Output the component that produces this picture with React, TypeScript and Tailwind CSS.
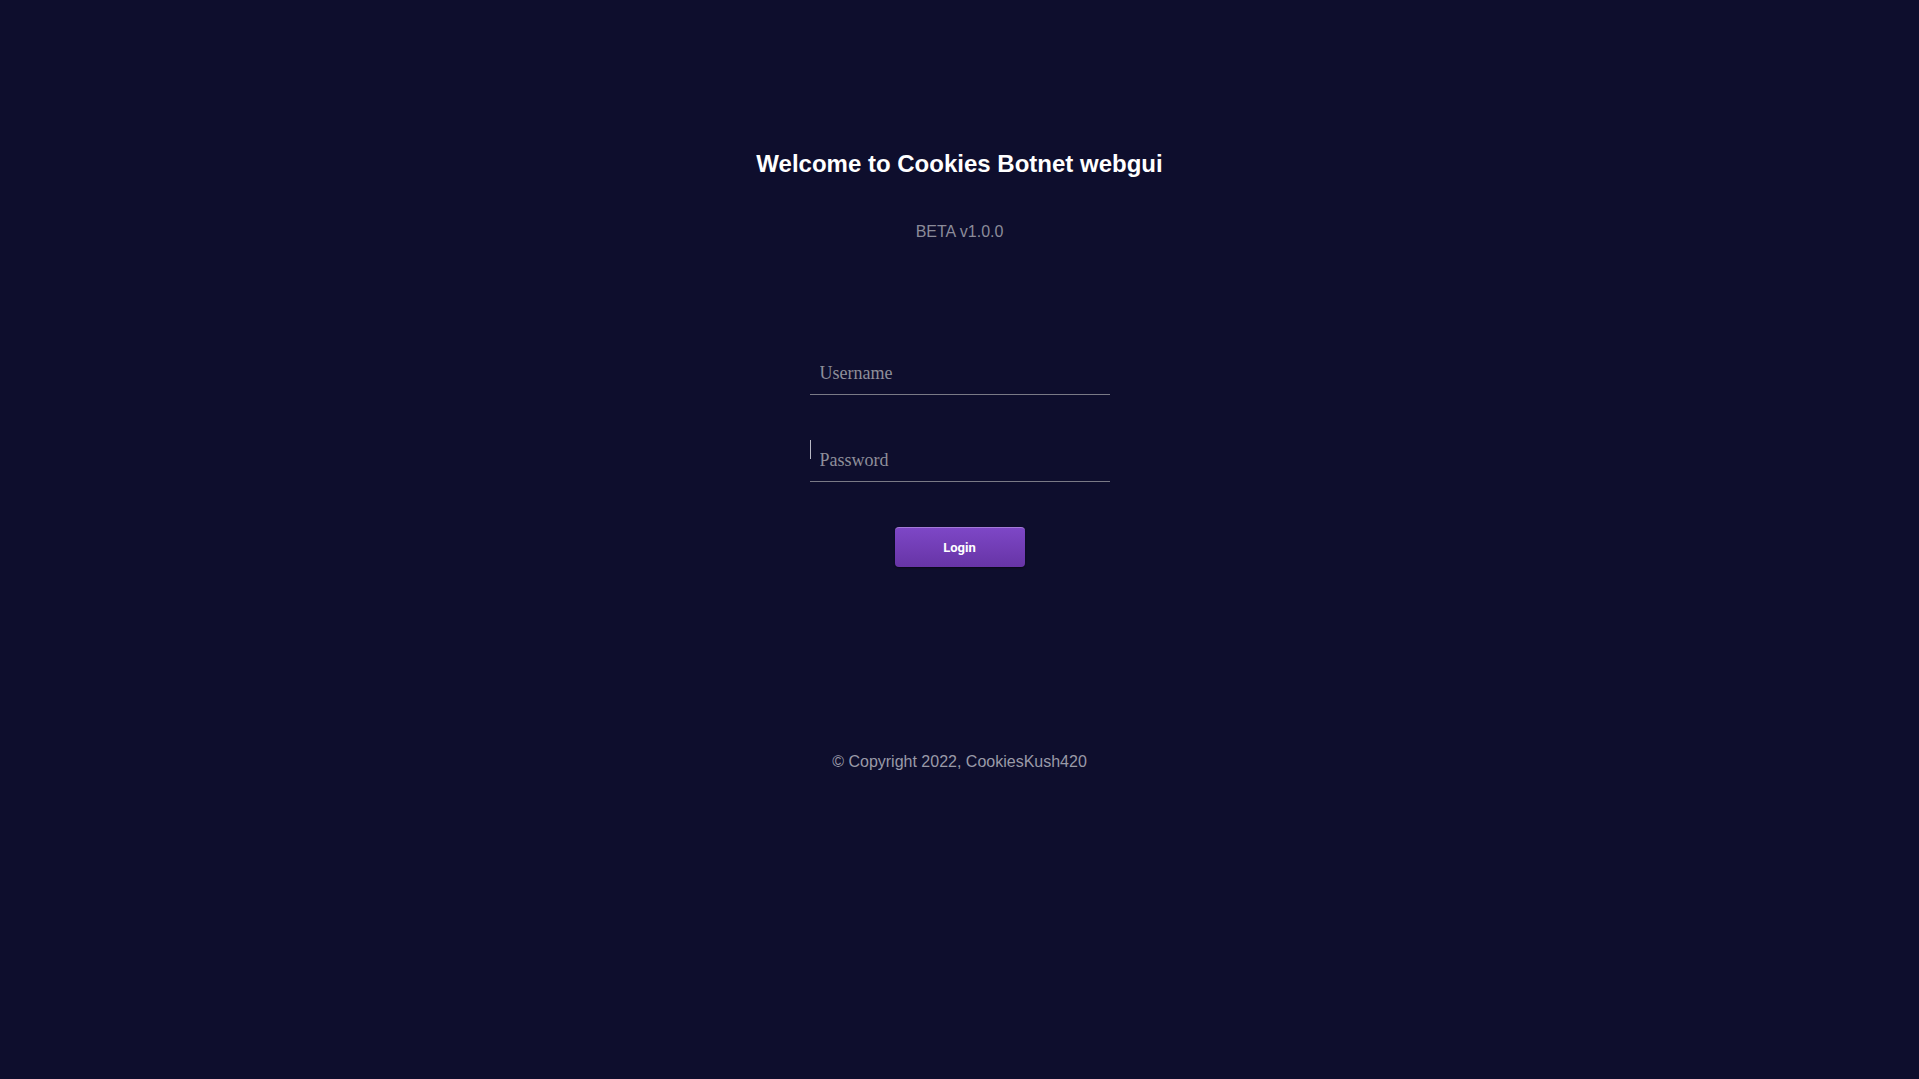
// Login page - centered title, underlined inputs, purple login button

export default function App() {
  return (
    <div className="flex min-h-screen w-full flex-col items-center bg-[#0e0e2d] font-['Liberation_Sans',Arial,sans-serif]">
      {/* Header */}
      <h2 className="mt-[150px] text-[24px] leading-[28px] font-bold text-white">
        Welcome to Cookies Botnet webgui
      </h2>
      <p className="mt-[44px] text-[16px] leading-[20px] text-[#8b8b99]">BETA v1.0.0</p>

      {/* Form */}
      <form className="mt-[113px] flex w-[300px] flex-col items-center">
        <input
          type="text"
          placeholder="Username"
          className="h-[40px] w-full border-b border-[#7a7a86] bg-transparent px-[10px] pb-[2px] font-['Liberation_Serif','Times_New_Roman',serif] text-[18px] text-[#9a9aa6] outline-none placeholder:text-[#8e8e9a]"
        />
        <div className="relative mt-[47px] w-full">
          <span className="absolute top-[-2px] left-0 h-[19px] w-px bg-[#b8b8c4]" />
          <input
            type="password"
            placeholder="Password"
            className="h-[40px] w-full border-b border-[#7a7a86] bg-transparent px-[10px] pb-[2px] font-['Liberation_Serif','Times_New_Roman',serif] text-[18px] text-[#9a9aa6] outline-none placeholder:text-[#8e8e9a]"
          />
        </div>
        <button
          type="button"
          className="mt-[45px] h-[40px] w-[130px] rounded-[4px] border-t border-[#a47ad8] bg-gradient-to-b from-[#7d47c6] to-[#6734a6] font-['Roboto',sans-serif] text-[13px] font-bold text-white shadow-[0_1px_2px_rgba(0,0,0,0.5)]"
        >
          Login
        </button>
      </form>

      {/* Footer */}
      <p className="mt-[185px] text-[16px] leading-[20px] text-[#9a9aa8]">
        © Copyright 2022, CookiesKush420
      </p>
    </div>
  )
}
